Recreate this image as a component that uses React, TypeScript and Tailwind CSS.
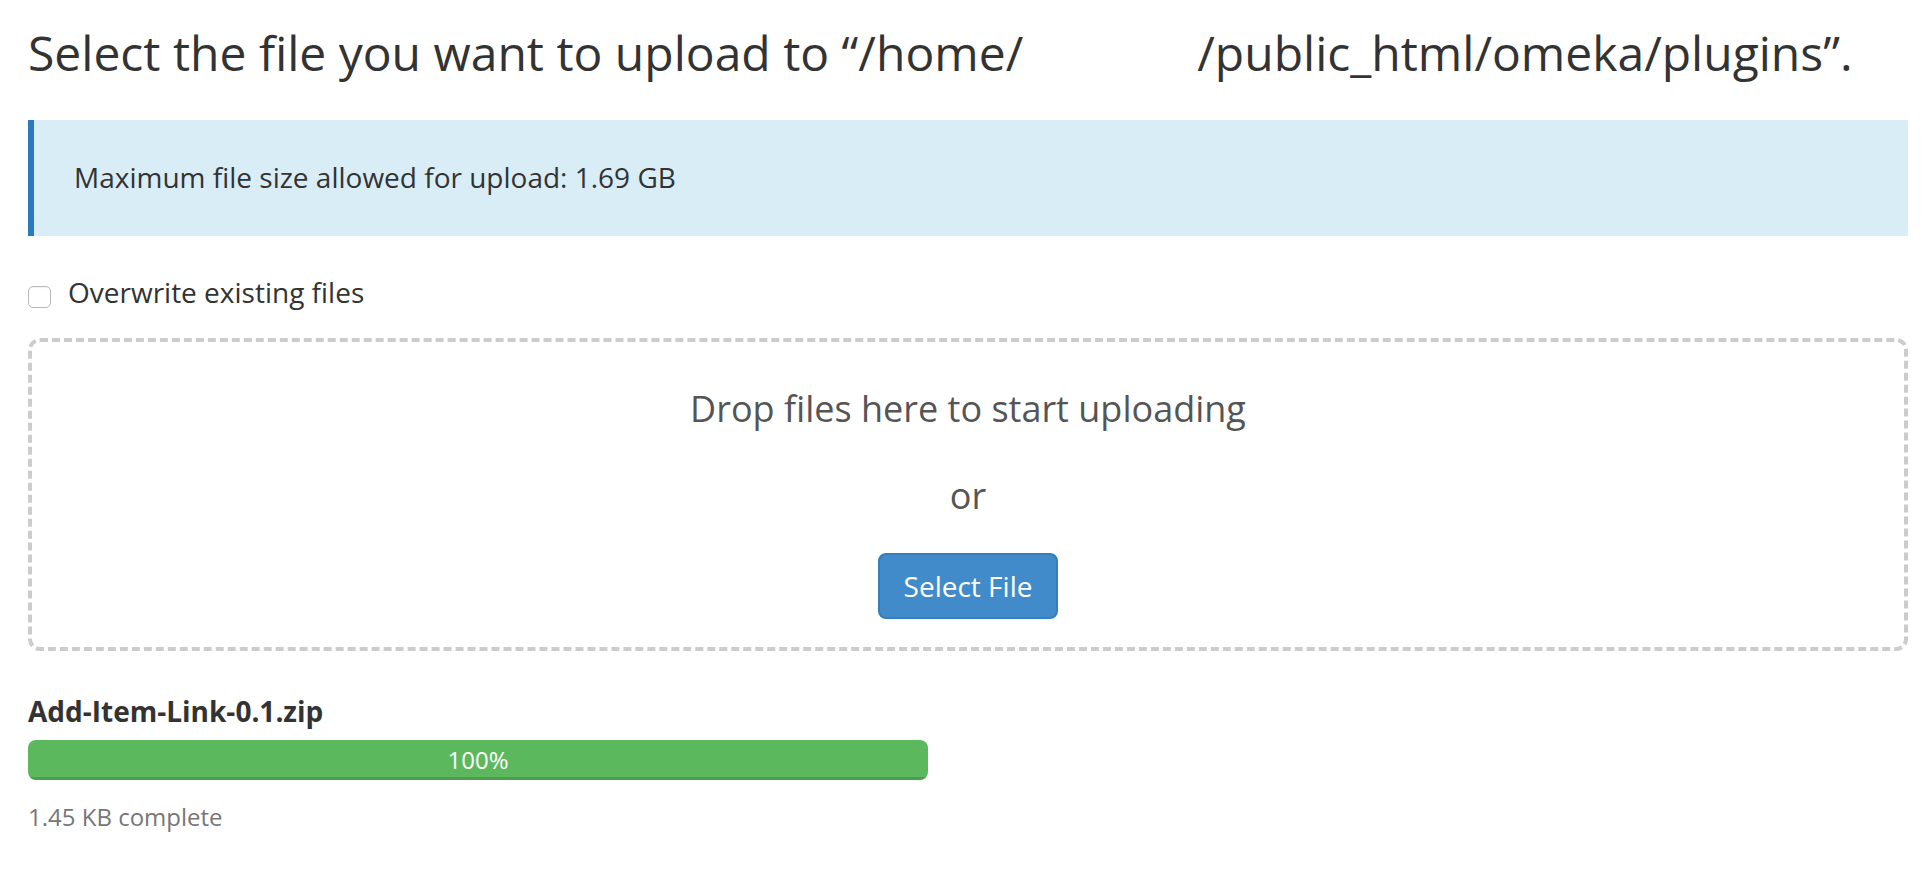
export default function App() {
  return (
    <div className="min-h-screen bg-white font-['Open_Sans',sans-serif] text-[#333]">
      <div className="w-[1880px] ml-[28px] pt-[27px]">
        {/* Title */}
        <h1 className="text-[48px] leading-[52px] font-normal whitespace-nowrap">
          Select the file you want to upload to “/home/
          <span className="inline-block w-[174px]" />
          /public_html/omeka/plugins”.
        </h1>

        {/* Info alert */}
        <div className="mt-[41px] bg-[#d9edf7] border-l-[6px] border-[#2a7bbb] pl-[40px] pt-[37px] pb-[39px]">
          <p className="text-[28px] leading-[40px]">Maximum file size allowed for upload: 1.69 GB</p>
        </div>

        {/* Overwrite checkbox */}
        <label className="mt-[36px] flex items-start gap-[17px]">
          <input
            type="checkbox"
            className="appearance-none mt-[14px] w-[23px] h-[22px] rounded-[5px] border border-[#b9b9b9] bg-white shadow-[inset_0_1px_1px_rgba(0,0,0,0.06)]"
          />
          <span className="text-[28px] leading-[40px]">Overwrite existing files</span>
        </label>

        {/* Drop zone */}
        <div className="mt-[26px] h-[313px] border-[4px] border-dashed border-[#cccccc] rounded-[12px] flex flex-col items-center pt-[41px] text-[#555]">
          <div className="text-[36px] leading-[52px]">Drop files here to start uploading</div>
          <div className="mt-[35px] text-[36px] leading-[52px]">or</div>
          <button className="mt-[31px] h-[66px] px-[24px] rounded-[8px] bg-[#428bca] border-2 border-[#357ebd] text-white text-[28px] leading-[38px]">
            Select File
          </button>
        </div>

        {/* Upload progress */}
        <div className="mt-[40px]">
          <div className="text-[28px] leading-[40px] font-bold">Add-Item-Link-0.1.zip</div>
          <div className="mt-[9px] w-[900px] h-[40px] rounded-[8px] bg-[#f5f5f5] overflow-hidden">
            <div className="h-full w-full bg-[#5cb85c] shadow-[inset_0_-3px_0_rgba(0,0,0,0.15)] text-white text-[24px] leading-[40px] text-center">
              100%
            </div>
          </div>
          <div className="mt-[20px] text-[24px] leading-[34px] text-[#777]">1.45 KB complete</div>
        </div>
      </div>
    </div>
  )
}
